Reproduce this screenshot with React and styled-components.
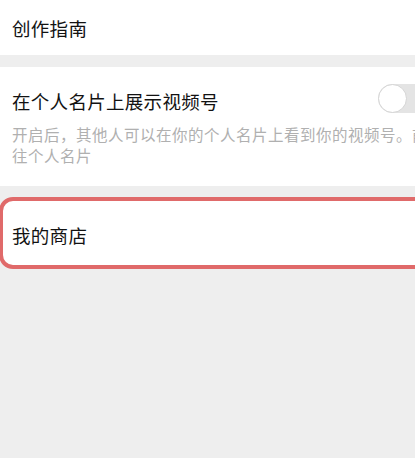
import React, { useState } from "react";
import styled, { createGlobalStyle } from "styled-components";

const GlobalStyle = createGlobalStyle`
  html, body {
    margin: 0;
    padding: 0;
    background: #eeeeee;
    overflow: hidden;
  }
  body {
    font-family: "Noto Sans CJK SC", "Noto Sans", sans-serif;
  }
`;

const Page = styled.div`
  width: 440px;
  min-height: 458px;
  background: #eeeeee;
  display: flex;
  flex-direction: column;
`;

const SimpleRow = styled.div`
  height: 55px;
  background: #ffffff;
  display: flex;
  align-items: center;
  padding: 0 12px;
`;

const Title = styled.div`
  font-size: 18.5px;
  line-height: 24px;
  color: #121212;
  letter-spacing: 0.3px;
`;

const SettingCard = styled.div`
  background: #ffffff;
  padding: 22px 12px 20px;
`;

const SettingHead = styled.div`
  display: flex;
  align-items: flex-start;
  justify-content: space-between;
  height: 24px;
`;

const Desc = styled.div`
  margin-top: 11px;
  width: 418px;
  font-size: 15.5px;
  line-height: 21px;
  color: #b0b0b0;
  letter-spacing: 0.5px;
`;

const Track = styled.button`
  position: relative;
  flex: none;
  width: 52px;
  height: 29px;
  margin: -5px -2px 0 0;
  border: none;
  padding: 0;
  border-radius: 15px;
  background: ${(props) => (props.$on ? "#07c160" : "#e4e4e4")};
  cursor: pointer;
`;

const Knob = styled.span`
  position: absolute;
  top: 0;
  left: ${(props) => (props.$on ? "23px" : "0")};
  width: 27px;
  height: 27px;
  border-radius: 50%;
  background: #ffffff;
  border: 1px solid #d4d4d4;
`;

const ShopRow = styled.div`
  height: 60px;
  margin-left: -1px;
  border: 4px solid #e06a6a;
  border-radius: 14px;
  background: #ffffff;
  display: flex;
  align-items: center;
  padding: 4px 0 0 9px;
`;

const Gap = styled.div`
  height: ${(props) => props.size}px;
`;

export default function App() {
  const [shown, setShown] = useState(false);

  return (
    <>
      <GlobalStyle />
      <Page>
        <SimpleRow>
          <Title>创作指南</Title>
        </SimpleRow>
        <Gap size={12} />
        <SettingCard>
          <SettingHead>
            <Title>在个人名片上展示视频号</Title>
            <Track $on={shown} onClick={() => setShown(!shown)}>
              <Knob $on={shown} />
            </Track>
          </SettingHead>
          <Desc>开启后，其他人可以在你的个人名片上看到你的视频号。前往个人名片</Desc>
        </SettingCard>
        <Gap size={11} />
        <ShopRow>
          <Title>我的商店</Title>
        </ShopRow>
      </Page>
    </>
  );
}
